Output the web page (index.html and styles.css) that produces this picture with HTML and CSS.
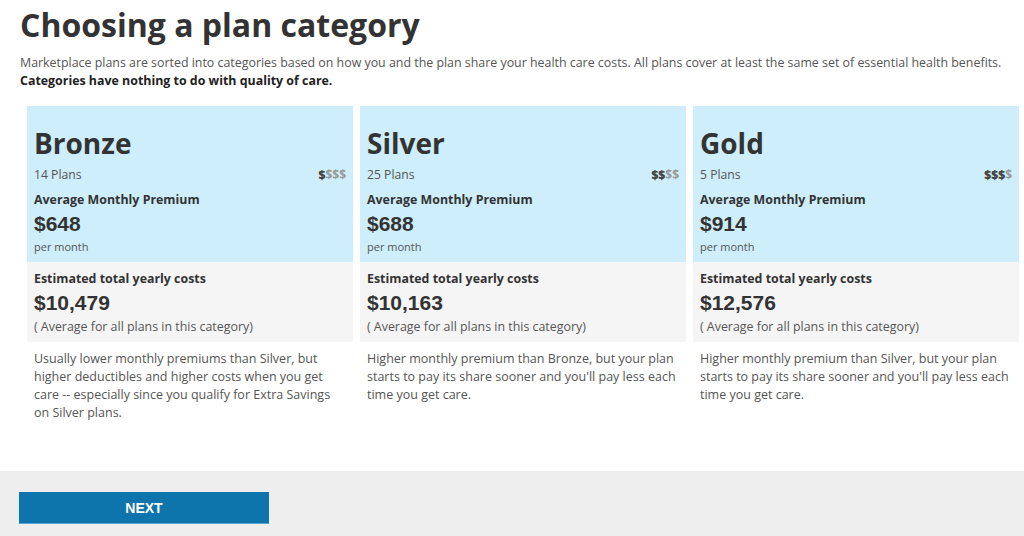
FILE: index.html
```html
<!DOCTYPE html>
<html lang="en">
<head>
    <meta charset="UTF-8">
    <title>Choosing a plan category</title>
    <link rel="stylesheet" href="styles.css">
</head>
<body>
    <main class="content">
        <h1>Choosing a plan category</h1>
        <p class="intro">Marketplace plans are sorted into categories based on how you and the plan share your health care costs. All plans cover at least the same set of essential health benefits.<br>
            <strong>Categories have nothing to do with quality of care.</strong></p>

        <!-- Plan categories -->
        <div class="plans">
            <div class="plan">
                <div class="plan-top">
                    <h2>Bronze</h2>
                    <div class="plan-row">
                        <span class="count">14 Plans</span>
                        <span class="cost"><b>$</b>$$$</span>
                    </div>
                    <div class="label">Average Monthly Premium</div>
                    <div class="amount">$648</div>
                    <div class="small">per month</div>
                </div>
                <div class="plan-mid">
                    <div class="label">Estimated total yearly costs</div>
                    <div class="amount">$10,479</div>
                    <div class="note">( Average for all plans in this category)</div>
                </div>
                <p class="desc">Usually lower monthly premiums than Silver, but higher deductibles and higher costs when you get care -- especially since you qualify for Extra Savings on Silver plans.</p>
            </div>

            <div class="plan">
                <div class="plan-top">
                    <h2>Silver</h2>
                    <div class="plan-row">
                        <span class="count">25 Plans</span>
                        <span class="cost"><b>$$</b>$$</span>
                    </div>
                    <div class="label">Average Monthly Premium</div>
                    <div class="amount">$688</div>
                    <div class="small">per month</div>
                </div>
                <div class="plan-mid">
                    <div class="label">Estimated total yearly costs</div>
                    <div class="amount">$10,163</div>
                    <div class="note">( Average for all plans in this category)</div>
                </div>
                <p class="desc">Higher monthly premium than Bronze, but your plan starts to pay its share sooner and you'll pay less each time you get care.</p>
            </div>

            <div class="plan">
                <div class="plan-top">
                    <h2>Gold</h2>
                    <div class="plan-row">
                        <span class="count">5 Plans</span>
                        <span class="cost"><b>$$$</b>$</span>
                    </div>
                    <div class="label">Average Monthly Premium</div>
                    <div class="amount">$914</div>
                    <div class="small">per month</div>
                </div>
                <div class="plan-mid">
                    <div class="label">Estimated total yearly costs</div>
                    <div class="amount">$12,576</div>
                    <div class="note">( Average for all plans in this category)</div>
                </div>
                <p class="desc">Higher monthly premium than Silver, but your plan starts to pay its share sooner and you'll pay less each time you get care.</p>
            </div>
        </div>
    </main>

    <footer class="actions">
        <button class="next-btn">NEXT</button>
    </footer>
</body>
</html>
```

FILE: styles.css
```css
/* General */
body {
    margin: 0;
    font-family: "Open Sans", Arial, sans-serif;
    color: #333;
    background-color: #fff;
}

.content {
    padding: 0 20px;
    height: 471px;
    box-sizing: border-box;
}

h1 {
    margin: 0;
    padding-top: 3px;
    font-size: 32px;
    line-height: 44px;
    font-weight: 700;
    color: #333;
}

.intro {
    margin: 7px 0 0;
    font-size: 12.4px;
    line-height: 18px;
    color: #555;
}

.intro strong {
    color: #222;
}

/* Plans */
.plans {
    display: flex;
    gap: 7px;
    margin: 16px -15px 0 7px;
}

.plan {
    flex: 1;
}

.plan-top {
    background-color: #cdeefa;
    padding: 14px 7px 6px;
    height: 156px;
    box-sizing: border-box;
}

.plan-top h2 {
    margin: 0;
    font-size: 28px;
    line-height: 46px;
    color: #333;
}

.plan-row {
    display: flex;
    justify-content: space-between;
    align-items: center;
    line-height: 18px;
}

.count {
    font-size: 12.2px;
    color: #555;
}

.cost {
    font-size: 12px;
    font-weight: 700;
    color: #999;
}

.cost b {
    color: #444;
}

.label {
    font-size: 12.4px;
    font-weight: 700;
    color: #333;
    line-height: 18px;
}

.plan-top .label {
    margin-top: 7px;
}

.amount {
    font-family: "Liberation Sans", Arial, sans-serif;
    font-size: 21px;
    font-weight: 700;
    line-height: 30px;
    color: #333;
}

.small {
    font-size: 11px;
    color: #555;
    line-height: 16px;
}

.plan-mid {
    background-color: #f5f5f5;
    padding: 8px 7px 7px;
    height: 80px;
    box-sizing: border-box;
}

.note {
    font-size: 12.4px;
    color: #555;
    line-height: 18px;
}

.desc {
    margin: 8px 0 0;
    padding: 0 7px;
    font-size: 12.5px;
    line-height: 18px;
    color: #555;
}

/* Footer */
.actions {
    background-color: #eeeeee;
    height: 65px;
    padding: 21px 19px 0;
    box-sizing: border-box;
}

.next-btn {
    width: 250px;
    height: 32px;
    border: none;
    border-bottom: 1px solid #5aa5cf;
    background-color: #0e75ac;
    color: #fff;
    font-family: "Liberation Sans", Arial, sans-serif;
    font-size: 14px;
    font-weight: 700;
    cursor: pointer;
}
```
